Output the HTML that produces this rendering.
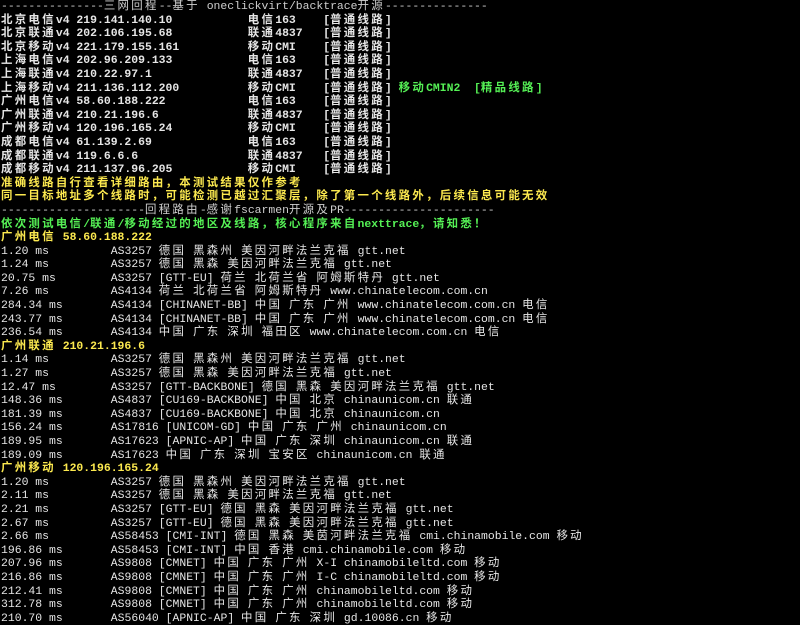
<!DOCTYPE html>
<html><head><meta charset="utf-8"><style>
html,body{margin:0;padding:0;background:#000;width:800px;height:623px;overflow:hidden}
pre{position:absolute;left:1px;top:0px;margin:0;font-family:"Liberation Mono","DejaVu Sans Mono",monospace;font-size:11.43px;line-height:13.6px;color:#e6e6e6;white-space:pre}
i{font-style:normal;font-family:"Noto Sans CJK SC","WenQuanYi Zen Hei",sans-serif;letter-spacing:2.29px;font-size:11.43px;line-height:0}
span{line-height:13.6px}
.b{font-weight:bold}
.y{color:#fce94f;font-weight:bold}
.g{color:#55f055;font-weight:bold}
.h{color:#cfcfcf}
.t,.u{display:inline-block;width:109.8px;line-height:0}
</style></head><body><pre><span class="h">---------------<i>三网回程</i>--<i>基于</i> oneclickvirt/backtrace<i>开源</i>---------------</span>
<span class="b"><i>北京电信</i>v4 219.141.140.10           <i>电信</i>163    [<i>普通线路</i>]</span>
<span class="b"><i>北京联通</i>v4 202.106.195.68           <i>联通</i>4837   [<i>普通线路</i>]</span>
<span class="b"><i>北京移动</i>v4 221.179.155.161          <i>移动</i>CMI    [<i>普通线路</i>]</span>
<span class="b"><i>上海电信</i>v4 202.96.209.133           <i>电信</i>163    [<i>普通线路</i>]</span>
<span class="b"><i>上海联通</i>v4 210.22.97.1              <i>联通</i>4837   [<i>普通线路</i>]</span>
<span class="b"><i>上海移动</i>v4 211.136.112.200          <i>移动</i>CMI    [<i>普通线路</i>]</span> <span class="g"><i>移动</i>CMIN2  [<i>精品线路</i>]</span>
<span class="b"><i>广州电信</i>v4 58.60.188.222            <i>电信</i>163    [<i>普通线路</i>]</span>
<span class="b"><i>广州联通</i>v4 210.21.196.6             <i>联通</i>4837   [<i>普通线路</i>]</span>
<span class="b"><i>广州移动</i>v4 120.196.165.24           <i>移动</i>CMI    [<i>普通线路</i>]</span>
<span class="b"><i>成都电信</i>v4 61.139.2.69              <i>电信</i>163    [<i>普通线路</i>]</span>
<span class="b"><i>成都联通</i>v4 119.6.6.6                <i>联通</i>4837   [<i>普通线路</i>]</span>
<span class="b"><i>成都移动</i>v4 211.137.96.205           <i>移动</i>CMI    [<i>普通线路</i>]</span>
<span class="y"><i>准确线路自行查看详细路由，本测试结果仅作参考</i></span>
<span class="y"><i>同一目标地址多个线路时，可能检测已越过汇聚层，除了第一个线路外，后续信息可能无效</i></span>
<span class="h">---------------------<i>回程路由</i>-<i>感谢</i>fscarmen<i>开源及</i>PR----------------------</span>
<span class="g"><i>依次测试电信</i>/<i>联通</i>/<i>移动经过的地区及线路，核心程序来自</i>nexttrace<i>，请知悉！</i></span>
<span class="y"><i>广州电信</i> 58.60.188.222</span>
<span class="t">1.20 ms</span>AS3257 <i>德国</i> <i>黑森州</i> <i>美因河畔法兰克福</i> gtt.net
<span class="t">1.24 ms</span>AS3257 <i>德国</i> <i>黑森</i> <i>美因河畔法兰克福</i> gtt.net
<span class="t">20.75 ms</span>AS3257 [GTT-EU] <i>荷兰</i> <i>北荷兰省</i> <i>阿姆斯特丹</i> gtt.net
<span class="t">7.26 ms</span>AS4134 <i>荷兰</i> <i>北荷兰省</i> <i>阿姆斯特丹</i> www.chinatelecom.com.cn
<span class="t">284.34 ms</span>AS4134 [CHINANET-BB] <i>中国</i> <i>广东</i> <i>广州</i> www.chinatelecom.com.cn <i>电信</i>
<span class="t">243.77 ms</span>AS4134 [CHINANET-BB] <i>中国</i> <i>广东</i> <i>广州</i> www.chinatelecom.com.cn <i>电信</i>
<span class="t">236.54 ms</span>AS4134 <i>中国</i> <i>广东</i> <i>深圳</i> <i>福田区</i> www.chinatelecom.com.cn <i>电信</i>
<span class="y"><i>广州联通</i> 210.21.196.6</span>
<span class="t">1.14 ms</span>AS3257 <i>德国</i> <i>黑森州</i> <i>美因河畔法兰克福</i> gtt.net
<span class="t">1.27 ms</span>AS3257 <i>德国</i> <i>黑森</i> <i>美因河畔法兰克福</i> gtt.net
<span class="t">12.47 ms</span>AS3257 [GTT-BACKBONE] <i>德国</i> <i>黑森</i> <i>美因河畔法兰克福</i> gtt.net
<span class="t">148.36 ms</span>AS4837 [CU169-BACKBONE] <i>中国</i> <i>北京</i> chinaunicom.cn <i>联通</i>
<span class="t">181.39 ms</span>AS4837 [CU169-BACKBONE] <i>中国</i> <i>北京</i> chinaunicom.cn
<span class="t">156.24 ms</span>AS17816 [UNICOM-GD] <i>中国</i> <i>广东</i> <i>广州</i> chinaunicom.cn
<span class="t">189.95 ms</span>AS17623 [APNIC-AP] <i>中国</i> <i>广东</i> <i>深圳</i> chinaunicom.cn <i>联通</i>
<span class="t">189.09 ms</span>AS17623 <i>中国</i> <i>广东</i> <i>深圳</i> <i>宝安区</i> chinaunicom.cn <i>联通</i>
<span class="y"><i>广州移动</i> 120.196.165.24</span>
<span class="t">1.20 ms</span>AS3257 <i>德国</i> <i>黑森州</i> <i>美因河畔法兰克福</i> gtt.net
<span class="u">2.11 ms</span>AS3257 <i>德国</i> <i>黑森</i> <i>美因河畔法兰克福</i> gtt.net
<span class="u">2.21 ms</span>AS3257 [GTT-EU] <i>德国</i> <i>黑森</i> <i>美因河畔法兰克福</i> gtt.net
<span class="u">2.67 ms</span>AS3257 [GTT-EU] <i>德国</i> <i>黑森</i> <i>美因河畔法兰克福</i> gtt.net
<span class="u">2.66 ms</span>AS58453 [CMI-INT] <i>德国</i> <i>黑森</i> <i>美茵河畔法兰克福</i> cmi.chinamobile.com <i>移动</i>
<span class="u">196.86 ms</span>AS58453 [CMI-INT] <i>中国</i> <i>香港</i> cmi.chinamobile.com <i>移动</i>
<span class="u">207.96 ms</span>AS9808 [CMNET] <i>中国</i> <i>广东</i> <i>广州</i> X-I chinamobileltd.com <i>移动</i>
<span class="u">216.86 ms</span>AS9808 [CMNET] <i>中国</i> <i>广东</i> <i>广州</i> I-C chinamobileltd.com <i>移动</i>
<span class="u">212.41 ms</span>AS9808 [CMNET] <i>中国</i> <i>广东</i> <i>广州</i> chinamobileltd.com <i>移动</i>
<span class="u">312.78 ms</span>AS9808 [CMNET] <i>中国</i> <i>广东</i> <i>广州</i> chinamobileltd.com <i>移动</i>
<span class="u">210.70 ms</span>AS56040 [APNIC-AP] <i>中国</i> <i>广东</i> <i>深圳</i> gd.10086.cn <i>移动</i></pre></body></html>
